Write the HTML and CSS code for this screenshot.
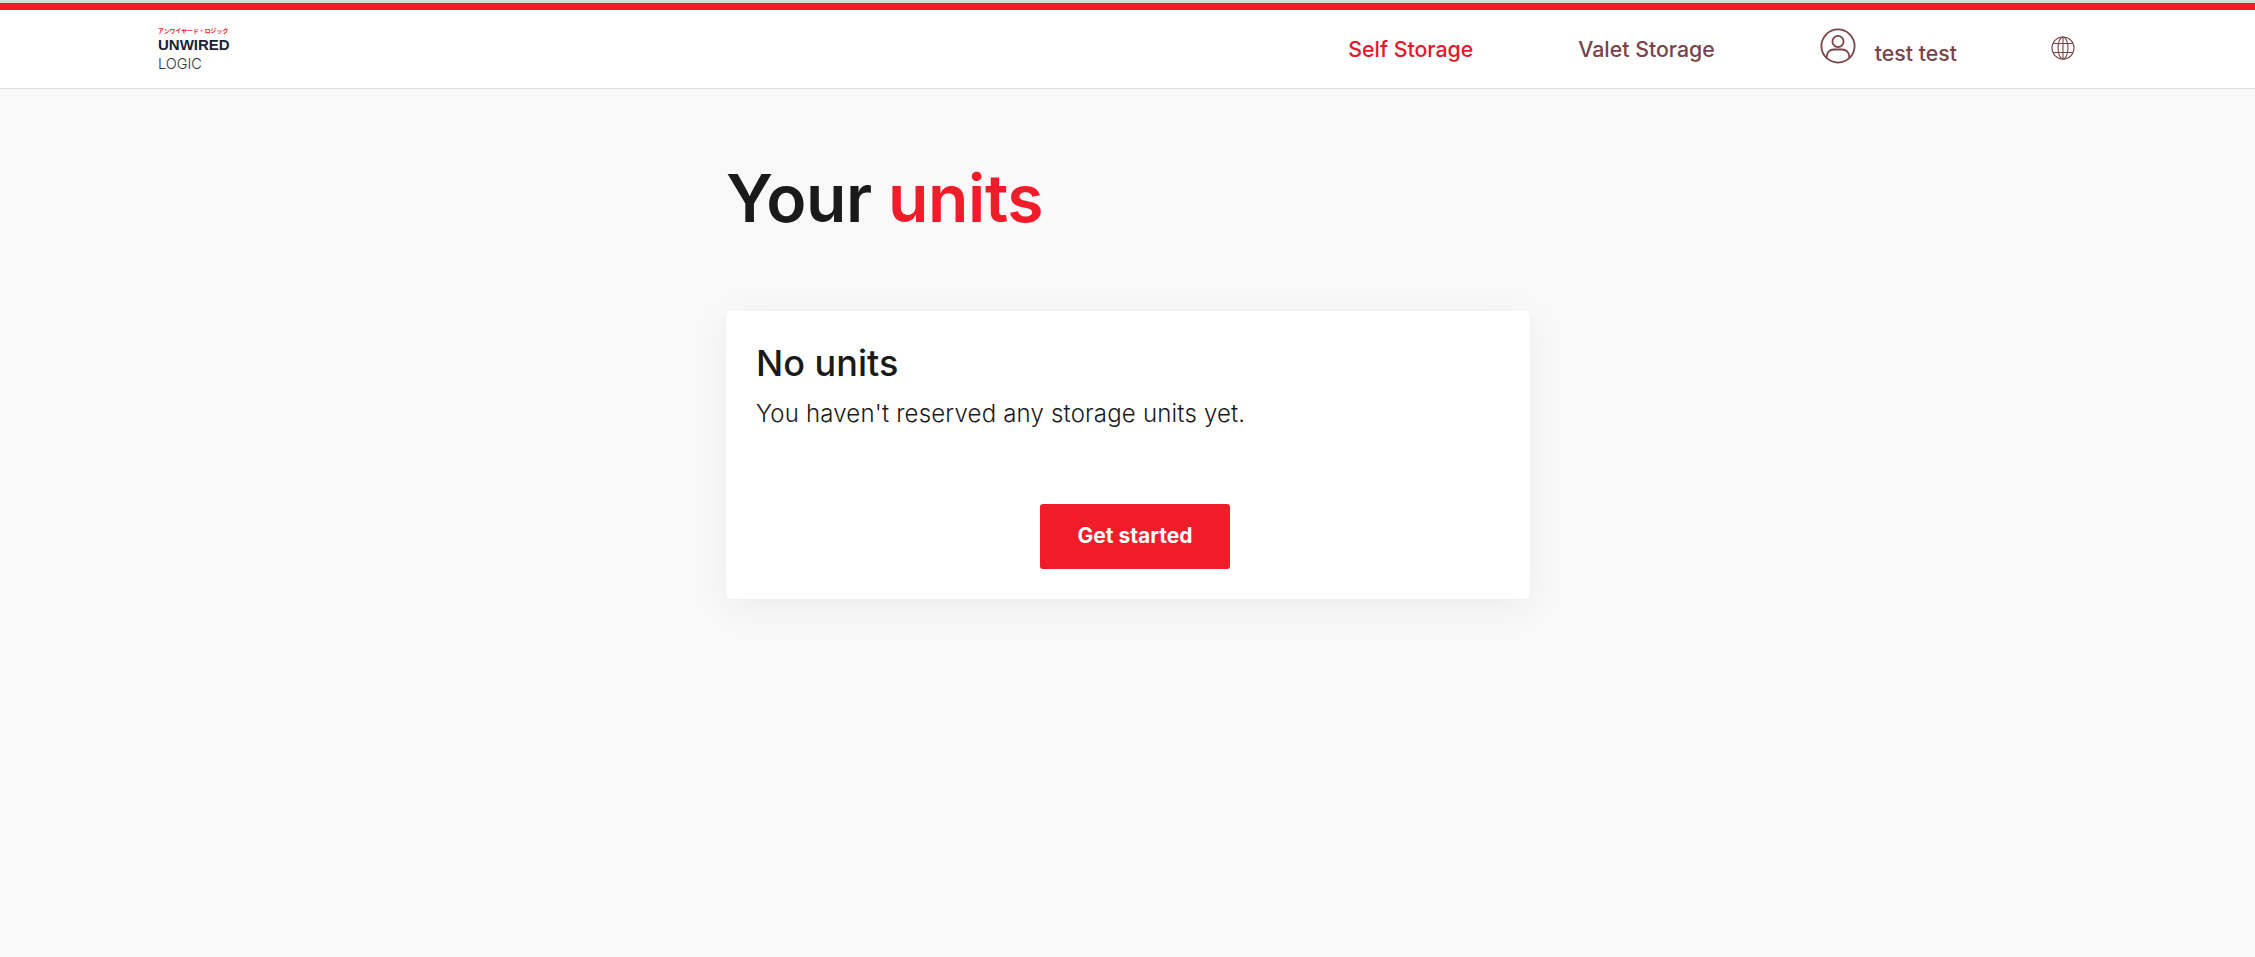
FILE: index.html
```html
<!DOCTYPE html>
<html lang="en">
<head>
<meta charset="utf-8">
<title>Your units</title>
<link rel="stylesheet" href="styles.css">
</head>
<body>
<div class="topline"></div>
<header class="header">
  <a class="logo" href="#">
    <span class="logo-jp">アンワイヤード・ロジック</span>
    <span class="logo-main">UNWIRED</span>
    <span class="logo-sub">LOGIC</span>
  </a>
  <nav class="nav">
    <a class="nav-link active" href="#">Self Storage</a>
    <a class="nav-link valet" href="#">Valet Storage</a>
    <a class="user" href="#">
      <svg class="user-icon" viewBox="0 0 36 36" fill="none" stroke="currentColor" stroke-width="1.8"><circle cx="18" cy="18" r="16.6"/><circle cx="18" cy="13.5" r="5.6"/><path d="M6.8 29.5v-1.2c0-4.2 3.2-6.8 7-6.8h8.4c3.8 0 7 2.6 7 6.8v1.2"/></svg>
      <span class="user-name">test test</span>
    </a>
    <a class="globe" href="#" aria-label="Language">
      <svg viewBox="0 0 24 24" fill="none" stroke="currentColor" stroke-width="1.1"><circle cx="12" cy="12" r="11"/><ellipse cx="12" cy="12" rx="5" ry="11"/><path d="M12 1v22M2.2 7.5h19.6M2.2 16.5h19.6"/></svg>
    </a>
  </nav>
</header>
<main class="main">
  <h1 class="title">Your <span class="accent">units</span></h1>
  <section class="card">
    <h2 class="card-title">No units</h2>
    <p class="card-text">You haven't reserved any storage units yet.</p>
    <div class="card-actions"><a class="button" href="#">Get started</a></div>
  </section>
</main>
</body>
</html>
```
FILE: styles.css
```css
* { box-sizing: border-box; }
html, body { margin: 0; height: 100%; }
body {
  background: #f9f9f9;
  font-family: Inter, "Liberation Sans", sans-serif;
  color: #1a1a1a;
  min-height: 957px;
}
a { text-decoration: none; color: inherit; }
.topline { height: 10px; background: #f01c2a; border-top: 3px solid #dcdcdc; }
.header {
  height: 79px;
  background: #fff;
  border-bottom: 1px solid #dedede;
  display: flex;
  align-items: center;
  padding-left: 158px;
  padding-right: 180px;
  justify-content: space-between;
}
.logo { display: flex; flex-direction: column; width: 72px; margin-top: 1px; }
.logo-jp { font: 700 5.9px/9px "Noto Sans CJK JP", sans-serif; color: #f01c2a; white-space: nowrap; }
.logo-main { font: 700 15px/20px "Liberation Sans", sans-serif; color: #1b1f33; }
.logo-sub { font: 300 14.5px/18px Inter, sans-serif; color: #2f3242; }
.nav { display: flex; align-items: center; font-size: 21.3px; font-weight: 500; color: #7d4248; }
.nav-link.active { color: #e5182b; }
.valet { margin-left: 105px; }
.user { display: flex; align-items: center; margin-left: 105px; }
.user-icon { width: 36px; height: 36px; margin-top: -6px; }
.user-name { margin-left: 19px; margin-top: 7px; }
.globe { display: block; width: 24px; height: 24px; margin-left: 94px; margin-top: -3px; }
.globe svg { display: block; width: 100%; height: 100%; }
.main { width: 804px; margin-left: 726px; }
.title { margin: 0; padding-top: 64px; padding-bottom: 1px; font-size: 66px; line-height: 90px; font-weight: 600; letter-spacing: -0.4px; }
.accent { color: #f01c2a; }
.card {
  margin-top: 67px;
  height: 288px;
  background: #fff;
  border-radius: 6px;
  box-shadow: 0 8px 40px rgba(0,0,0,.06);
  padding: 30px 30px 30px;
  display: flex;
  flex-direction: column;
}
.card-title { margin: 0; font-size: 36px; line-height: 44px; font-weight: 500; }
.card-text { margin: 13px 0 0; font-size: 24px; line-height: 32px; font-weight: 300; letter-spacing: 0.18px; }
.card-actions { margin-top: auto; display: flex; justify-content: center; margin-right: -14px; }
.button {
  width: 190px;
  height: 65px;
  padding-bottom: 2px;
  background: #f01c2a;
  color: #fff;
  border-radius: 3px;
  font-size: 21px;
  font-weight: 700;
  display: flex;
  align-items: center;
  justify-content: center;
}
```
